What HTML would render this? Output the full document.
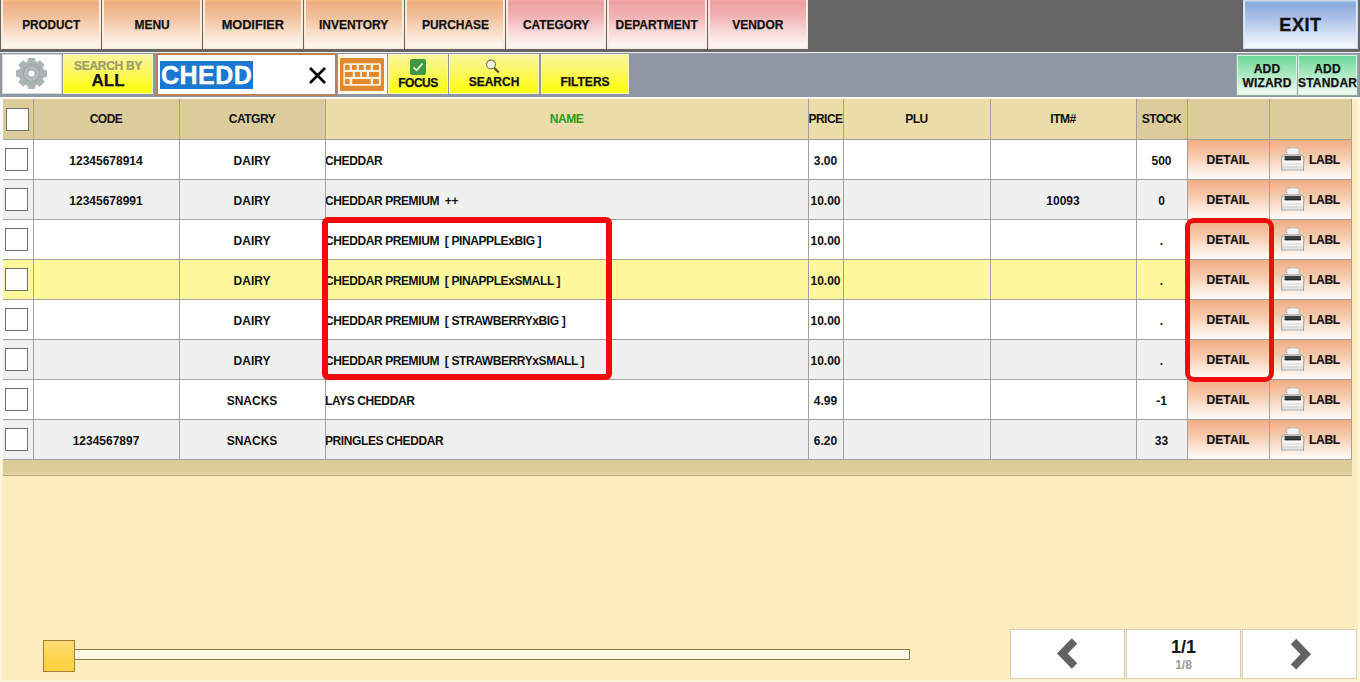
<!DOCTYPE html>
<html><head><meta charset="utf-8">
<style>
*{margin:0;padding:0;box-sizing:border-box}
html,body{width:1360px;height:682px;overflow:hidden;background:#fdedbe;font-family:"Liberation Sans",sans-serif;font-weight:bold;color:#111}
.a{position:absolute}
.topbar{left:0;top:0;width:1360px;height:52px;background:#666}
.tb{top:0;height:49px;border:1px solid #fbe9d8;border-top:0;display:flex;align-items:center;justify-content:center;font-size:13px;-webkit-text-stroke:0.25px #111}
.tb span{display:inline-block;transform:scaleX(0.92)}
.or{background:linear-gradient(#f7bb80,#eeae84 5%,#f2c09c 35%,#f8dcc6 65%,#fdf4ea 92%);box-shadow:inset 1px 0 #fcefdc,inset -1px 0 #fcefdc}
.pk{background:linear-gradient(#f4a8a8,#eca2a2 5%,#f2b4b4 35%,#f8d8d8 65%,#fdf2f2 92%);box-shadow:inset 1px 0 #fbeaea,inset -1px 0 #fbeaea}
.row2{left:0;top:52px;width:1360px;height:45px;background:#8f97a4;border-top:1px solid #f0f0f0}
.yb{-webkit-text-stroke:0.25px #111;box-shadow:inset 0 0 0 1px #f6f2c4;background:linear-gradient(#fbf6a0,#fdf860 45%,#ffff00);top:54px;height:40px}
.grid{left:3px;top:98px;width:1349px;height:362px;background:#fff}
.hl{height:1px;background:#a0a0a0}
.vl{width:1px;background:#a0a0a0}
.t{font-size:12px;white-space:nowrap}
.cb{width:23px;height:23px;border:1px solid #707070;background:#fff}
.dt{background:linear-gradient(#f2ae84,#f6c9aa 40%,#fdf7f2 92%)}
</style></head><body>
<svg width="0" height="0" style="position:absolute"><defs>
<linearGradient id="pb" x1="0" y1="0" x2="0" y2="1"><stop offset="0" stop-color="#e2e2e2"/><stop offset="0.45" stop-color="#f8f8f8"/><stop offset="0.75" stop-color="#ececec"/><stop offset="1" stop-color="#d8d8d8"/></linearGradient>
<symbol id="prn" viewBox="0 0 24 24">
<path d="M5.8 10V3Q5.8 1.6 7.2 1.3Q12 0.3 16.8 1.3Q18.1 1.6 18.1 3V10Z" fill="#f3f3f3" stroke="#a8a8a8" stroke-width="0.7"/>
<path d="M0.9 24.4L0.5 12Q0.5 7.9 3.6 7.9H19.8Q22.9 7.9 22.9 12L22.5 24.4Z" fill="url(#pb)" stroke="#8e8e8e" stroke-width="0.9"/>
<rect x="3.6" y="9" width="16.3" height="4.2" fill="#3a4242"/>
<rect x="3.6" y="12" width="16.3" height="1.2" fill="#222a2a"/>
<rect x="2.2" y="16.6" width="19" height="0.8" fill="#d0d0d0"/>
<rect x="2.2" y="19.6" width="19" height="0.8" fill="#c6c6c6"/>
<rect x="2" y="22.4" width="19.4" height="0.8" fill="#bcbcbc"/>
</symbol></defs></svg>
<!-- top bar -->
<div class="a topbar"></div>
<div class="a tb or" style="left:1px;width:100px"><span style="transform:scaleX(0.9)">PRODUCT</span></div>
<div class="a tb or" style="left:102px;width:100px"><span>MENU</span></div>
<div class="a tb or" style="left:203px;width:100px"><span style="transform:scaleX(0.98)">MODIFIER</span></div>
<div class="a tb or" style="left:304px;width:100px"><span>INVENTORY</span></div>
<div class="a tb or" style="left:405px;width:100px"><span>PURCHASE</span></div>
<div class="a tb pk" style="left:506px;width:100px"><span>CATEGORY</span></div>
<div class="a tb pk" style="left:607px;width:100px"><span>DEPARTMENT</span></div>
<div class="a tb pk" style="left:708px;width:100px"><span>VENDOR</span></div>
<div class="a tb" style="left:1243px;width:115px;font-size:18px;letter-spacing:0.6px;padding-top:1px;background:linear-gradient(#a6d0f2,#88a9dc 4%,#a8c0e8 35%,#d4e0f4 70%,#f2f7fd 95%);border:1px solid #cfdbe6;box-shadow:inset 1px 0 #e6f0fa,inset -1px 0 #e6f0fa;-webkit-text-stroke:0.35px #111">EXIT</div>

<!-- row 2 -->
<div class="a row2"></div>
<div class="a" style="left:2px;top:54px;width:60px;height:40px;background:#fff;border:1px solid #d8d8d8"></div>
<svg class="a" style="left:15px;top:57px" width="33" height="33" viewBox="-16.5 -16.5 33 33">
<path d="M-3.49 -11.79L-3.05 -14.99L3.05 -14.99L3.49 -11.79L5.87 -10.81L8.44 -12.76L12.76 -8.44L10.81 -5.87L11.79 -3.49L14.99 -3.05L14.99 3.05L11.79 3.49L10.81 5.87L12.76 8.44L8.44 12.76L5.87 10.81L3.49 11.79L3.05 14.99L-3.05 14.99L-3.49 11.79L-5.87 10.81L-8.44 12.76L-12.76 8.44L-10.81 5.87L-11.79 3.49L-14.99 3.05L-14.99 -3.05L-11.79 -3.49L-10.81 -5.87L-12.76 -8.44L-8.44 -12.76L-5.87 -10.81Z" fill="#abb4b4" stroke="#abb4b4" stroke-width="1" stroke-linejoin="round"/>
<circle r="8.2" fill="#b4bcbc" stroke="#9ca6a6" stroke-width="1.2"/>
<circle r="4.6" fill="#a4aeae"/>
<circle r="3.1" fill="#fff"/>
</svg>
<div class="a yb" style="left:63px;width:90px;text-align:center">
  <div style="font-size:12px;color:#9c9c6c;-webkit-text-stroke:0.2px #9c9c6c;line-height:12px;margin-top:6px;letter-spacing:-0.3px">SEARCH BY</div>
  <div style="font-size:17px;line-height:17px">ALL</div>
</div>
<div class="a" style="left:156px;top:53px;width:181px;height:43px;border:2px solid #b7825c;background:#fff"></div>
<div class="a" style="left:160px;top:61px;width:93px;height:28px;background:#1a78d0;color:#fff;font-size:25px;line-height:29px;padding-left:1px;letter-spacing:0.5px;-webkit-text-stroke:0.4px #fff">CHEDD</div>
<svg class="a" style="left:308px;top:67px" width="19" height="17" viewBox="0 0 19 17"><path d="M2 1L17 16M17 1L2 16" stroke="#000" stroke-width="2.6"/></svg>
<div class="a" style="left:338px;top:54px;width:49px;height:40px;background:#fdf8ee"></div>
<svg class="a" style="left:340px;top:58px" width="44" height="33" viewBox="0 0 44 33">
<rect width="44" height="33" rx="1" fill="#e0892e"/>
<rect x="3.4" y="5.2" width="37.5" height="22.5" rx="1.5" fill="#fdf1e0"/>
<g fill="#e0892e">
<rect x="4.9" y="7" width="4.7" height="4.9"/><rect x="12" y="7" width="4.7" height="4.9"/><rect x="19" y="7" width="4.7" height="4.9"/><rect x="26" y="7" width="4.7" height="4.9"/><rect x="33.1" y="7" width="5.8" height="4.9"/>
<rect x="4.9" y="14" width="7.8" height="4.9"/><rect x="14.9" y="14" width="5.3" height="4.9"/><rect x="21.9" y="14" width="4.9" height="4.9"/><rect x="29" y="14" width="9.9" height="4.9"/>
<rect x="4.9" y="21.1" width="4.7" height="4.9"/><rect x="12.2" y="21.1" width="18.5" height="4.9"/><rect x="33.1" y="21.1" width="5.8" height="4.9"/>
</g>
</svg>
<div class="a yb" style="left:388px;width:60px;text-align:center">
  <svg style="margin-top:5px;display:block;margin-left:22px" width="16" height="16" viewBox="0 0 16 16"><rect width="16" height="16" rx="2" fill="#3d9a42"/><path d="M3.5 8.3L6.7 11.3L12.5 4.5" fill="none" stroke="#dff8df" stroke-width="1.8"/></svg>
  <div style="font-size:12px;line-height:12px;margin-top:2px;letter-spacing:-0.5px">FOCUS</div>
</div>
<div class="a yb" style="left:449px;width:90px;text-align:center">
  <svg style="margin-top:5px;display:block;margin-left:36px" width="16" height="16" viewBox="0 0 16 16"><circle cx="6" cy="5.5" r="4.4" fill="#f2f2e0" stroke="#787858" stroke-width="1.1"/><path d="M9.3 9L13.8 13.6" stroke="#5a5020" stroke-width="2.2"/></svg>
  <div style="font-size:12px;line-height:12px;margin-top:1px">SEARCH</div>
</div>
<div class="a yb" style="left:541px;width:88px;text-align:center;font-size:12px;line-height:12px;padding-top:22px">FILTERS</div>
<div class="a" style="left:1236px;top:54px;width:62px;height:42px;background:linear-gradient(#68d896,#a8e8c0 45%,#eefaf2 95%);border:1px solid #98aca0;box-shadow:inset 0 0 0 1px #d8f2e2;text-align:center;font-size:12px;-webkit-text-stroke:0.25px #111;letter-spacing:0.2px;line-height:14px;padding-top:7px">ADD<br>WIZARD</div>
<div class="a" style="left:1297px;top:54px;width:61px;height:42px;background:linear-gradient(#68d896,#a8e8c0 45%,#eefaf2 95%);border:1px solid #98aca0;box-shadow:inset 0 0 0 1px #d8f2e2;text-align:center;font-size:12px;-webkit-text-stroke:0.25px #111;letter-spacing:0.2px;line-height:14px;padding-top:7px;overflow:hidden;white-space:nowrap">ADD<br>STANDARD</div>
<div class="a" style="left:0;top:97px;width:1360px;height:2px;background:#fbf7ea"></div>

<!-- table -->
<div class="a t" style="left:3px;top:99px;width:30px;height:40px;background:#dccb9b;text-align:center;line-height:41px;letter-spacing:-0.5px;color:#111"></div>
<div class="a t" style="left:33px;top:99px;width:146px;height:40px;background:#dccb9b;text-align:center;line-height:41px;letter-spacing:-0.5px;color:#111">CODE</div>
<div class="a t" style="left:179px;top:99px;width:146px;height:40px;background:#dccb9b;text-align:center;line-height:41px;letter-spacing:-0.5px;color:#111">CATGRY</div>
<div class="a t" style="left:325px;top:99px;width:483px;height:40px;background:#ecdca9;text-align:center;line-height:41px;letter-spacing:-0.5px;color:#2a9a1a">NAME</div>
<div class="a t" style="left:808px;top:99px;width:35px;height:40px;background:#ecdca9;text-align:center;line-height:41px;letter-spacing:-0.5px;color:#111">PRICE</div>
<div class="a t" style="left:843px;top:99px;width:147px;height:40px;background:#ecdca9;text-align:center;line-height:41px;letter-spacing:-0.5px;color:#111">PLU</div>
<div class="a t" style="left:990px;top:99px;width:146px;height:40px;background:#ecdca9;text-align:center;line-height:41px;letter-spacing:-0.5px;color:#111">ITM#</div>
<div class="a t" style="left:1136px;top:99px;width:51px;height:40px;background:#dccb9b;text-align:center;line-height:41px;letter-spacing:-0.5px;color:#111">STOCK</div>
<div class="a t" style="left:1187px;top:99px;width:82px;height:40px;background:#dccb9b;text-align:center;line-height:41px;letter-spacing:-0.5px;color:#111"></div>
<div class="a t" style="left:1269px;top:99px;width:82px;height:40px;background:#dccb9b;text-align:center;line-height:41px;letter-spacing:-0.5px;color:#111"></div>
<div class="a cb" style="left:6px;top:108px"></div>
<div class="a" style="left:3px;top:139px;width:1184px;height:40px;background:#ffffff"></div>
<div class="a cb" style="left:5px;top:148px"></div>
<div class="a t" style="left:33px;top:140px;width:146px;height:40px;line-height:43px;text-align:center">12345678914</div>
<div class="a t" style="left:179px;top:140px;width:146px;height:40px;line-height:43px;text-align:center">DAIRY</div>
<div class="a t" style="left:325px;top:140px;height:40px;line-height:43px;letter-spacing:-0.4px">CHEDDAR</div>
<div class="a t" style="left:808px;top:140px;width:35px;height:40px;line-height:43px;text-align:center">3.00</div>
<div class="a t" style="left:1136px;top:140px;width:51px;height:40px;line-height:43px;text-align:center">500</div>
<div class="a dt t" style="left:1187px;top:140px;width:82px;height:39px;text-align:center;line-height:41px;letter-spacing:0.1px;-webkit-text-stroke:0.2px #111">DETAIL</div>
<div class="a dt t" style="left:1270px;top:140px;width:81px;height:39px"><svg class="a" style="left:11px;top:7px" width="24" height="24" viewBox="0 0 24 24"><use href="#prn"/></svg><span class="a" style="left:39px;top:0;line-height:41px;letter-spacing:-0.3px;-webkit-text-stroke:0.2px #111">LABL</span></div>
<div class="a" style="left:3px;top:179px;width:1184px;height:40px;background:#f0f0f0"></div>
<div class="a cb" style="left:5px;top:188px"></div>
<div class="a t" style="left:33px;top:180px;width:146px;height:40px;line-height:43px;text-align:center">12345678991</div>
<div class="a t" style="left:179px;top:180px;width:146px;height:40px;line-height:43px;text-align:center">DAIRY</div>
<div class="a t" style="left:325px;top:180px;height:40px;line-height:43px;letter-spacing:-0.4px">CHEDDAR PREMIUM&nbsp; ++</div>
<div class="a t" style="left:808px;top:180px;width:35px;height:40px;line-height:43px;text-align:center">10.00</div>
<div class="a t" style="left:990px;top:180px;width:146px;height:40px;line-height:43px;text-align:center">10093</div>
<div class="a t" style="left:1136px;top:180px;width:51px;height:40px;line-height:43px;text-align:center">0</div>
<div class="a dt t" style="left:1187px;top:180px;width:82px;height:39px;text-align:center;line-height:41px;letter-spacing:0.1px;-webkit-text-stroke:0.2px #111">DETAIL</div>
<div class="a dt t" style="left:1270px;top:180px;width:81px;height:39px"><svg class="a" style="left:11px;top:7px" width="24" height="24" viewBox="0 0 24 24"><use href="#prn"/></svg><span class="a" style="left:39px;top:0;line-height:41px;letter-spacing:-0.3px;-webkit-text-stroke:0.2px #111">LABL</span></div>
<div class="a" style="left:3px;top:219px;width:1184px;height:40px;background:#ffffff"></div>
<div class="a cb" style="left:5px;top:228px"></div>
<div class="a t" style="left:179px;top:220px;width:146px;height:40px;line-height:43px;text-align:center">DAIRY</div>
<div class="a t" style="left:325px;top:220px;height:40px;line-height:43px;letter-spacing:-0.4px">CHEDDAR PREMIUM&nbsp; [ PINAPPLExBIG ]</div>
<div class="a t" style="left:808px;top:220px;width:35px;height:40px;line-height:43px;text-align:center">10.00</div>
<div class="a t" style="left:1136px;top:220px;width:51px;height:40px;line-height:43px;text-align:center">.</div>
<div class="a dt t" style="left:1187px;top:220px;width:82px;height:39px;text-align:center;line-height:41px;letter-spacing:0.1px;-webkit-text-stroke:0.2px #111">DETAIL</div>
<div class="a dt t" style="left:1270px;top:220px;width:81px;height:39px"><svg class="a" style="left:11px;top:7px" width="24" height="24" viewBox="0 0 24 24"><use href="#prn"/></svg><span class="a" style="left:39px;top:0;line-height:41px;letter-spacing:-0.3px;-webkit-text-stroke:0.2px #111">LABL</span></div>
<div class="a" style="left:3px;top:259px;width:1184px;height:40px;background:#fdf99c"></div>
<div class="a cb" style="left:5px;top:268px"></div>
<div class="a t" style="left:179px;top:260px;width:146px;height:40px;line-height:43px;text-align:center">DAIRY</div>
<div class="a t" style="left:325px;top:260px;height:40px;line-height:43px;letter-spacing:-0.4px">CHEDDAR PREMIUM&nbsp; [ PINAPPLExSMALL ]</div>
<div class="a t" style="left:808px;top:260px;width:35px;height:40px;line-height:43px;text-align:center">10.00</div>
<div class="a t" style="left:1136px;top:260px;width:51px;height:40px;line-height:43px;text-align:center">.</div>
<div class="a dt t" style="left:1187px;top:260px;width:82px;height:39px;text-align:center;line-height:41px;letter-spacing:0.1px;-webkit-text-stroke:0.2px #111">DETAIL</div>
<div class="a dt t" style="left:1270px;top:260px;width:81px;height:39px"><svg class="a" style="left:11px;top:7px" width="24" height="24" viewBox="0 0 24 24"><use href="#prn"/></svg><span class="a" style="left:39px;top:0;line-height:41px;letter-spacing:-0.3px;-webkit-text-stroke:0.2px #111">LABL</span></div>
<div class="a" style="left:3px;top:299px;width:1184px;height:40px;background:#ffffff"></div>
<div class="a cb" style="left:5px;top:308px"></div>
<div class="a t" style="left:179px;top:300px;width:146px;height:40px;line-height:43px;text-align:center">DAIRY</div>
<div class="a t" style="left:325px;top:300px;height:40px;line-height:43px;letter-spacing:-0.4px">CHEDDAR PREMIUM&nbsp; [ STRAWBERRYxBIG ]</div>
<div class="a t" style="left:808px;top:300px;width:35px;height:40px;line-height:43px;text-align:center">10.00</div>
<div class="a t" style="left:1136px;top:300px;width:51px;height:40px;line-height:43px;text-align:center">.</div>
<div class="a dt t" style="left:1187px;top:300px;width:82px;height:39px;text-align:center;line-height:41px;letter-spacing:0.1px;-webkit-text-stroke:0.2px #111">DETAIL</div>
<div class="a dt t" style="left:1270px;top:300px;width:81px;height:39px"><svg class="a" style="left:11px;top:7px" width="24" height="24" viewBox="0 0 24 24"><use href="#prn"/></svg><span class="a" style="left:39px;top:0;line-height:41px;letter-spacing:-0.3px;-webkit-text-stroke:0.2px #111">LABL</span></div>
<div class="a" style="left:3px;top:339px;width:1184px;height:40px;background:#f0f0f0"></div>
<div class="a cb" style="left:5px;top:348px"></div>
<div class="a t" style="left:179px;top:340px;width:146px;height:40px;line-height:43px;text-align:center">DAIRY</div>
<div class="a t" style="left:325px;top:340px;height:40px;line-height:43px;letter-spacing:-0.4px">CHEDDAR PREMIUM&nbsp; [ STRAWBERRYxSMALL ]</div>
<div class="a t" style="left:808px;top:340px;width:35px;height:40px;line-height:43px;text-align:center">10.00</div>
<div class="a t" style="left:1136px;top:340px;width:51px;height:40px;line-height:43px;text-align:center">.</div>
<div class="a dt t" style="left:1187px;top:340px;width:82px;height:39px;text-align:center;line-height:41px;letter-spacing:0.1px;-webkit-text-stroke:0.2px #111">DETAIL</div>
<div class="a dt t" style="left:1270px;top:340px;width:81px;height:39px"><svg class="a" style="left:11px;top:7px" width="24" height="24" viewBox="0 0 24 24"><use href="#prn"/></svg><span class="a" style="left:39px;top:0;line-height:41px;letter-spacing:-0.3px;-webkit-text-stroke:0.2px #111">LABL</span></div>
<div class="a" style="left:3px;top:379px;width:1184px;height:40px;background:#ffffff"></div>
<div class="a cb" style="left:5px;top:388px"></div>
<div class="a t" style="left:179px;top:380px;width:146px;height:40px;line-height:43px;text-align:center">SNACKS</div>
<div class="a t" style="left:325px;top:380px;height:40px;line-height:43px;letter-spacing:-0.4px">LAYS CHEDDAR</div>
<div class="a t" style="left:808px;top:380px;width:35px;height:40px;line-height:43px;text-align:center">4.99</div>
<div class="a t" style="left:1136px;top:380px;width:51px;height:40px;line-height:43px;text-align:center">-1</div>
<div class="a dt t" style="left:1187px;top:380px;width:82px;height:39px;text-align:center;line-height:41px;letter-spacing:0.1px;-webkit-text-stroke:0.2px #111">DETAIL</div>
<div class="a dt t" style="left:1270px;top:380px;width:81px;height:39px"><svg class="a" style="left:11px;top:7px" width="24" height="24" viewBox="0 0 24 24"><use href="#prn"/></svg><span class="a" style="left:39px;top:0;line-height:41px;letter-spacing:-0.3px;-webkit-text-stroke:0.2px #111">LABL</span></div>
<div class="a" style="left:3px;top:419px;width:1184px;height:40px;background:#f0f0f0"></div>
<div class="a cb" style="left:5px;top:428px"></div>
<div class="a t" style="left:33px;top:420px;width:146px;height:40px;line-height:43px;text-align:center">1234567897</div>
<div class="a t" style="left:179px;top:420px;width:146px;height:40px;line-height:43px;text-align:center">SNACKS</div>
<div class="a t" style="left:325px;top:420px;height:40px;line-height:43px;letter-spacing:-0.4px">PRINGLES CHEDDAR</div>
<div class="a t" style="left:808px;top:420px;width:35px;height:40px;line-height:43px;text-align:center">6.20</div>
<div class="a t" style="left:1136px;top:420px;width:51px;height:40px;line-height:43px;text-align:center">33</div>
<div class="a dt t" style="left:1187px;top:420px;width:82px;height:39px;text-align:center;line-height:41px;letter-spacing:0.1px;-webkit-text-stroke:0.2px #111">DETAIL</div>
<div class="a dt t" style="left:1270px;top:420px;width:81px;height:39px"><svg class="a" style="left:11px;top:7px" width="24" height="24" viewBox="0 0 24 24"><use href="#prn"/></svg><span class="a" style="left:39px;top:0;line-height:41px;letter-spacing:-0.3px;-webkit-text-stroke:0.2px #111">LABL</span></div>
<div class="a hl" style="left:3px;top:139px;width:1349px"></div>
<div class="a hl" style="left:3px;top:179px;width:1349px"></div>
<div class="a hl" style="left:3px;top:219px;width:1349px"></div>
<div class="a hl" style="left:3px;top:259px;width:1349px"></div>
<div class="a hl" style="left:3px;top:299px;width:1349px"></div>
<div class="a hl" style="left:3px;top:339px;width:1349px"></div>
<div class="a hl" style="left:3px;top:379px;width:1349px"></div>
<div class="a hl" style="left:3px;top:419px;width:1349px"></div>
<div class="a hl" style="left:3px;top:459px;width:1349px"></div>
<div class="a vl" style="left:33px;top:99px;height:361px"></div>
<div class="a vl" style="left:179px;top:99px;height:361px"></div>
<div class="a vl" style="left:325px;top:99px;height:361px"></div>
<div class="a vl" style="left:808px;top:99px;height:361px"></div>
<div class="a vl" style="left:843px;top:99px;height:361px"></div>
<div class="a vl" style="left:990px;top:99px;height:361px"></div>
<div class="a vl" style="left:1136px;top:99px;height:361px"></div>
<div class="a vl" style="left:1187px;top:99px;height:361px"></div>
<div class="a vl" style="left:1269px;top:99px;height:361px"></div>
<div class="a vl" style="left:1351px;top:99px;height:361px"></div>
<div class="a" style="left:3px;top:460px;width:1349px;height:16px;background:linear-gradient(#dccb9b,#dccb98 70%,#e2d4a8);border-bottom:1px solid #b8a878"></div>
<!-- /table -->
<div class="a" style="left:0;top:99px;width:3px;height:361px;background:#fafaf6"></div>
<div class="a" style="left:0;top:460px;width:2px;height:222px;background:#fdf6da"></div>
<div class="a" style="left:1357px;top:97px;width:3px;height:585px;background:#fdf5d8"></div>
<div class="a" style="left:0;top:680px;width:1360px;height:2px;background:#fcf4d8"></div>
<!-- red boxes -->
<div class="a" style="left:322px;top:217px;width:290px;height:163px;border:6px solid #f00c0c;border-radius:6px"></div>
<div class="a" style="left:1185px;top:218px;width:89px;height:164px;border:5.5px solid #f00c0c;border-radius:9px"></div>
<!-- slider -->
<div class="a" style="left:74px;top:649px;width:836px;height:11px;border:1px solid #8a7a50;background:#fdf6e0"></div>
<div class="a" style="left:43px;top:640px;width:32px;height:32px;border:1px solid #a08030;background:linear-gradient(#fddc78,#fdd44c 60%,#fdd040)"></div>
<!-- pagination -->
<div class="a" style="left:1010px;top:629px;width:115px;height:50px;background:#fff;border:1px solid #d4d0c0"></div>
<div class="a" style="left:1126px;top:629px;width:115px;height:50px;background:#fff;border:1px solid #d4d0c0;text-align:center">
<div style="font-size:18px;line-height:18px;margin-top:8px">1/1</div>
<div style="font-size:12px;line-height:12px;margin-top:3px;color:#999">1/8</div></div>
<div class="a" style="left:1242px;top:629px;width:115px;height:50px;background:#fff;border:1px solid #d4d0c0"></div>
<svg class="a" style="left:1054px;top:635px" width="28" height="36" viewBox="0 0 28 36"><path d="M20.5 6L8.3 18.5L20.5 31" fill="none" stroke="#636363" stroke-width="7.6" stroke-linejoin="miter" stroke-linecap="butt"/></svg>
<svg class="a" style="left:1286px;top:636px" width="28" height="36" viewBox="0 0 28 36"><path d="M7.5 5.5L19.7 18.2L7.5 31" fill="none" stroke="#636363" stroke-width="7.6" stroke-linejoin="miter" stroke-linecap="butt"/></svg>
</body></html>
